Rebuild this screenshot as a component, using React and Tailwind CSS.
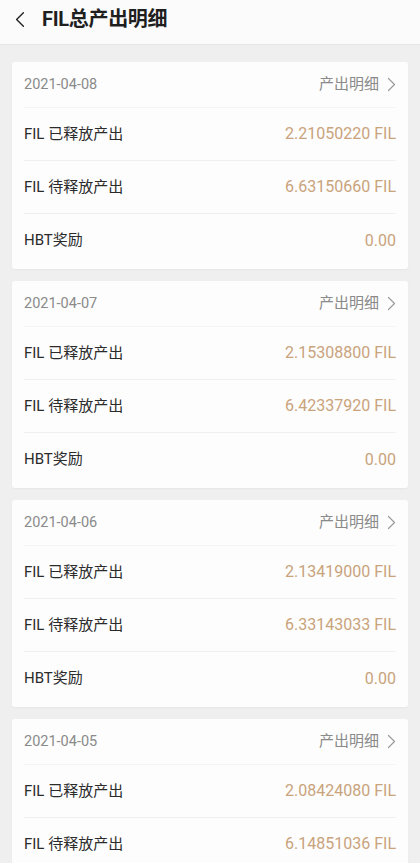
import React from "react";

const records = [
  { date: "2021-04-08", released: "2.21050220", pending: "6.63150660", hbt: "0.00" },
  { date: "2021-04-07", released: "2.15308800", pending: "6.42337920", hbt: "0.00" },
  { date: "2021-04-06", released: "2.13419000", pending: "6.33143033", hbt: "0.00" },
  { date: "2021-04-05", released: "2.08424080", pending: "6.14851036", hbt: "0.00" },
];

const font = { fontFamily: '"Roboto", "Noto Sans CJK SC", sans-serif' };

const Chevron = ({ className, dir = "right" }) => (
  <svg viewBox="0 0 12 20" className={className} fill="none" stroke="currentColor" strokeWidth="1.6" strokeLinecap="round" strokeLinejoin="round">
    {dir === "right" ? <path d="M2 2l8 8-8 8" /> : <path d="M10 2L2 10l8 8" />}
  </svg>
);

const Row = ({ label, value, last }) => (
  <div className={`mx-3 flex items-center justify-between ${last ? "h-[55px] pb-0.5" : "h-[53px] border-b border-[#f0f0f0]"}`}>
    <span className="text-[15px] text-[#2b2b2b]">{label}</span>
    <span className="text-[16px] text-[#c9a37c]">{value}</span>
  </div>
);

const Card = ({ date, released, pending, hbt }) => (
  <div className="bg-[#fdfdfd] rounded-[3px] shadow-[0_1px_2px_rgba(0,0,0,0.04)]">
    <div className="mx-3 flex items-center justify-between h-[46px] border-b border-[#f5f5f5]">
      <span className="text-[14.5px] text-[#8a8a8a]">{date}</span>
      <span className="flex items-center gap-2 text-[15px] text-[#8a8a8a]">
        产出明细
        <Chevron className="w-[9px] h-[15px] text-[#9a9a9a]" />
      </span>
    </div>
    <Row label="FIL 已释放产出" value={`${released} FIL`} />
    <Row label="FIL 待释放产出" value={`${pending} FIL`} />
    <Row label="HBT奖励" value={hbt} last />
  </div>
);

export default function App() {
  return (
    <div className="h-[863px] overflow-hidden bg-[#efefef]" style={font}>
      {/* Header */}
      <div className="h-[45px] bg-[#fbfbfb] border-b border-[#e6e6e6] flex items-center pb-1.5 pl-[14px]">
        <Chevron dir="left" className="w-[12px] h-[17px] text-[#222]" />
        <span className="ml-[16px] text-[20px] font-bold text-[#1f1f1f] tracking-[-0.3px]">FIL总产出明细</span>
      </div>

      {/* List */}
      <div className="px-3 pt-[17px] flex flex-col gap-[12px]">
        {records.map((r) => (
          <Card key={r.date} {...r} />
        ))}
      </div>
    </div>
  );
}
